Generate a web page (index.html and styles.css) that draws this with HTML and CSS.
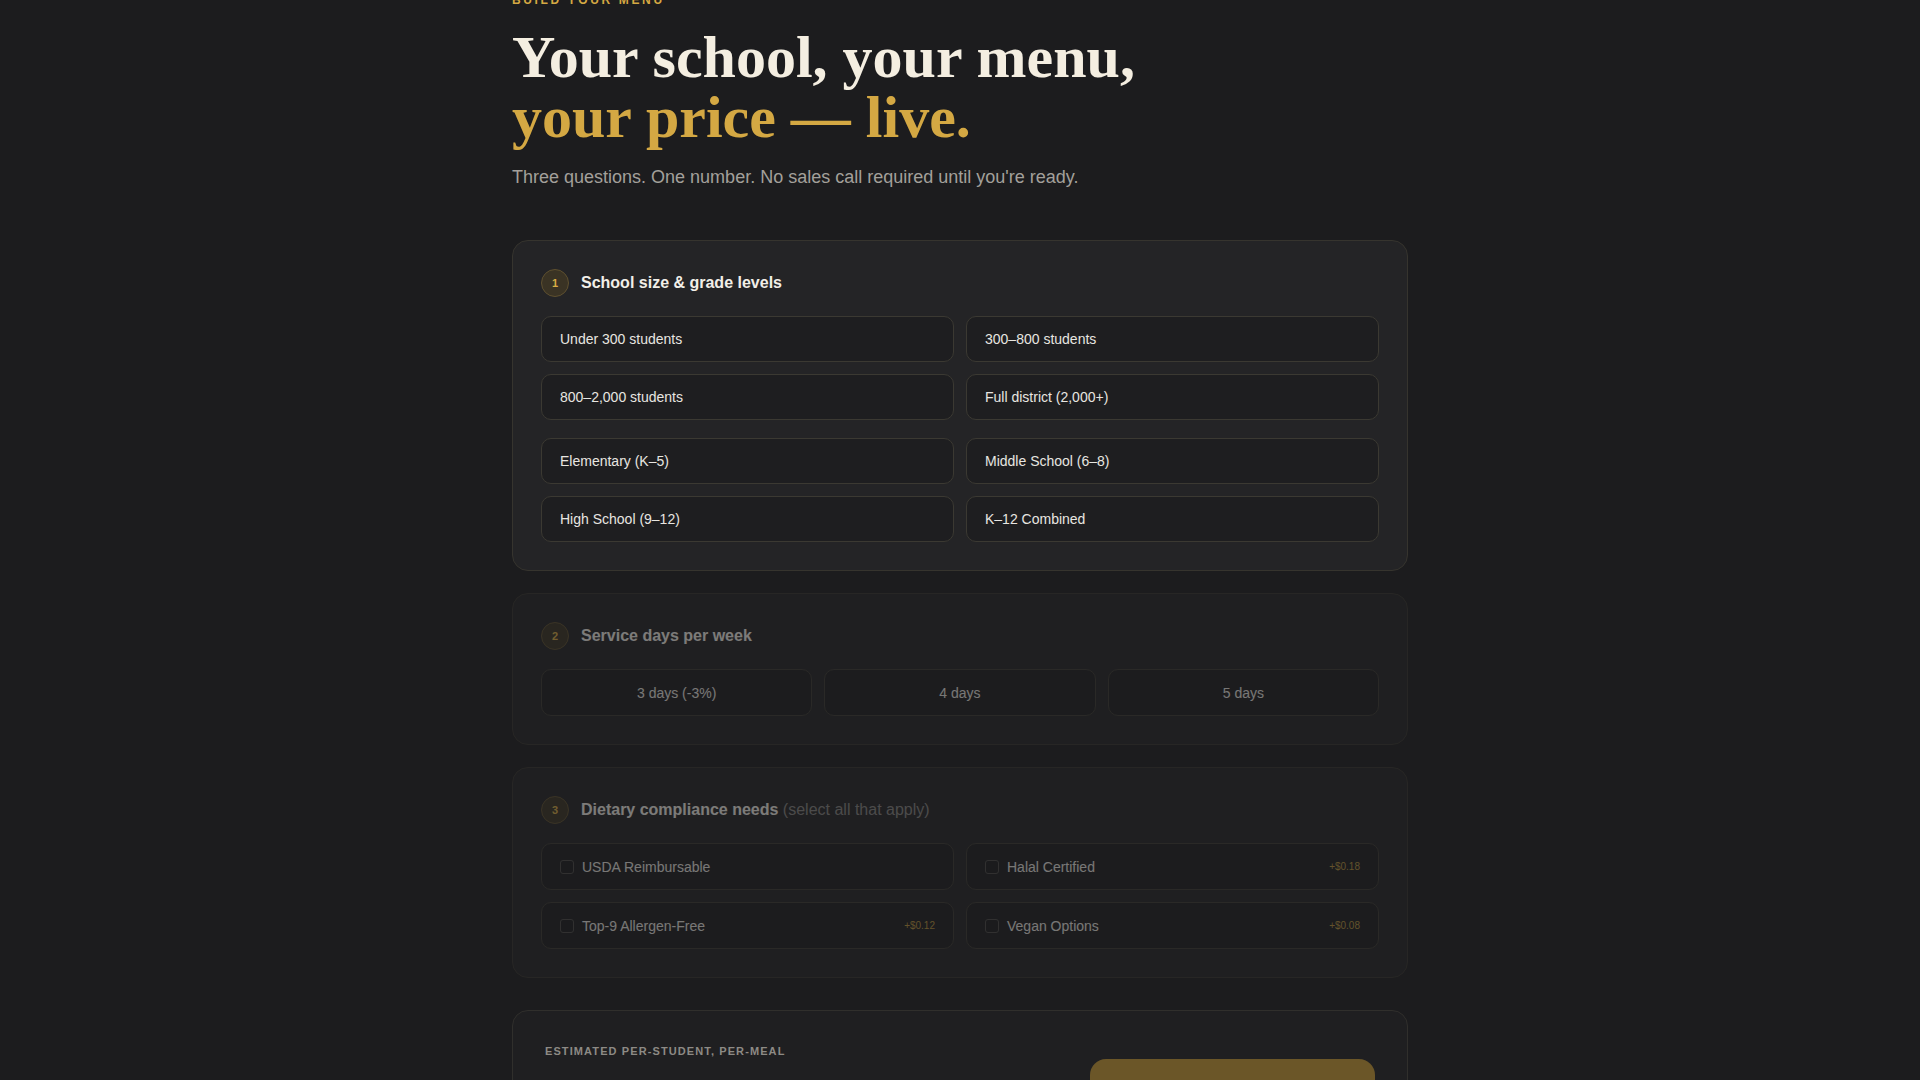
FILE: index.html
```html
<!DOCTYPE html>
<html lang="en">
<head>
<meta charset="utf-8">
<title>Build your menu</title>
<link rel="stylesheet" href="styles.css">
</head>
<body>
<main class="wrap">
  <p class="eyebrow">Build your menu</p>
  <h1 class="title">Your school, your menu,<br><span class="accent">your price — live.</span></h1>
  <p class="lead">Three questions. One number. No sales call required until you're ready.</p>

  <section class="step">
    <div class="step-head"><span class="num">1</span><h2>School size &amp; grade levels</h2></div>
    <div class="grid two">
      <button class="opt">Under 300 students</button>
      <button class="opt">300–800 students</button>
      <button class="opt">800–2,000 students</button>
      <button class="opt">Full district (2,000+)</button>
    </div>
    <div class="grid two">
      <button class="opt">Elementary (K–5)</button>
      <button class="opt">Middle School (6–8)</button>
      <button class="opt">High School (9–12)</button>
      <button class="opt">K–12 Combined</button>
    </div>
  </section>

  <section class="step locked">
    <div class="step-head"><span class="num">2</span><h2>Service days per week</h2></div>
    <div class="grid three">
      <button class="opt">3 days (-3%)</button>
      <button class="opt">4 days</button>
      <button class="opt">5 days</button>
    </div>
  </section>

  <section class="step locked">
    <div class="step-head"><span class="num">3</span><h2>Dietary compliance needs <span class="hint">(select all that apply)</span></h2></div>
    <div class="grid two">
      <label class="opt"><span class="check"></span>USDA Reimbursable</label>
      <label class="opt"><span class="check"></span>Halal Certified<span class="price">+$0.18</span></label>
      <label class="opt"><span class="check"></span>Top-9 Allergen-Free<span class="price">+$0.12</span></label>
      <label class="opt"><span class="check"></span>Vegan Options<span class="price">+$0.08</span></label>
    </div>
  </section>

  <section class="summary">
    <div class="sum-left">
      <p class="sum-label">Estimated per-student, per-meal</p>
      <p class="sum-price">—</p>
      <p class="sum-note">Complete all three steps to see your price</p>
    </div>
    <button class="cta">Lock in this price</button>
  </section>
</main>
</body>
</html>
```

FILE: styles.css
```css
body {
  margin: 0;
  background: #1c1c1e;
  color: #e8e6e1;
  font-family: "Liberation Sans", Arial, sans-serif;
}

.wrap {
  max-width: 896px;
  margin: -8px auto 0;
  padding-bottom: 80px;
}

.eyebrow {
  margin: 0 0 19px;
  font-size: 12px;
  line-height: 16px;
  font-weight: 700;
  letter-spacing: 0.22em;
  text-transform: uppercase;
  color: #d4a843;
}

.title {
  margin: 0;
  font-family: "Liberation Serif", "Times New Roman", serif;
  font-size: 60px;
  line-height: 1;
  font-weight: 700;
  color: #f4eee1;
}

.accent {
  color: #d4a843;
}

.lead {
  margin: 16px 0 49px;
  font-size: 18px;
  line-height: 28px;
  color: #a3a09b;
}

.step {
  background: #242426;
  border: 1px solid #36342e;
  border-radius: 16px;
  padding: 28px;
  margin-bottom: 22px;
}

.step.locked {
  opacity: 0.45;
}

.step-head {
  display: flex;
  align-items: center;
  gap: 12px;
  height: 28px;
  margin-bottom: 19px;
}

.num {
  box-sizing: border-box;
  width: 28px;
  height: 28px;
  border-radius: 50%;
  border: 1px solid #5e502f;
  background: #3a3324;
  color: #d9ad45;
  font-size: 11px;
  font-weight: 700;
  display: flex;
  align-items: center;
  justify-content: center;
  flex-shrink: 0;
}

.step-head h2 {
  margin: 0;
  font-size: 16px;
  line-height: 24px;
  font-weight: 700;
  color: #f2efe8;
}

.hint {
  font-weight: 400;
  color: #868482;
}

.grid {
  display: grid;
  gap: 12px;
}

.grid + .grid {
  margin-top: 18px;
}

.two {
  grid-template-columns: 1fr 1fr;
}

.three {
  grid-template-columns: repeat(3, 1fr);
}

.opt {
  box-sizing: border-box;
  height: 46px;
  padding: 0 18px;
  display: flex;
  align-items: center;
  background: #1e1e20;
  border: 1px solid #3b3932;
  border-radius: 10px;
  font-family: inherit;
  font-size: 14px;
  line-height: 20px;
  color: #e8e6e1;
  text-align: left;
  cursor: pointer;
}

.locked .opt {
  height: 47px;
}

.three .opt {
  justify-content: center;
}

.check {
  box-sizing: border-box;
  width: 14px;
  height: 14px;
  border: 1px solid #4b4a47;
  border-radius: 3px;
  background: #1a1a1c;
  margin-right: 8px;
  flex-shrink: 0;
}

.price {
  margin-left: auto;
  font-size: 10px;
  color: #b8933c;
}

.summary {
  margin-top: 32px;
  background: #1f1f21;
  border: 1px solid #302f2c;
  border-radius: 16px;
  padding: 32px;
  display: flex;
  justify-content: space-between;
  align-items: center;
}

.sum-left p {
  margin: 0;
}

.sum-label {
  font-size: 11px;
  line-height: 16px;
  font-weight: 700;
  letter-spacing: 0.1em;
  text-transform: uppercase;
  color: #8d8a85;
}

.sum-price {
  font-family: "Liberation Serif", "Times New Roman", serif;
  font-size: 48px;
  line-height: 60px;
  font-weight: 700;
  color: #d4a843;
}

.sum-note {
  font-size: 13px;
  line-height: 16px;
  color: #8d8a85;
}

.cta {
  width: 285px;
  height: 60px;
  border: 0;
  border-radius: 16px;
  background: #6b5628;
  color: #1c1c1e;
  font-family: inherit;
  font-size: 15px;
  font-weight: 700;
}
```
